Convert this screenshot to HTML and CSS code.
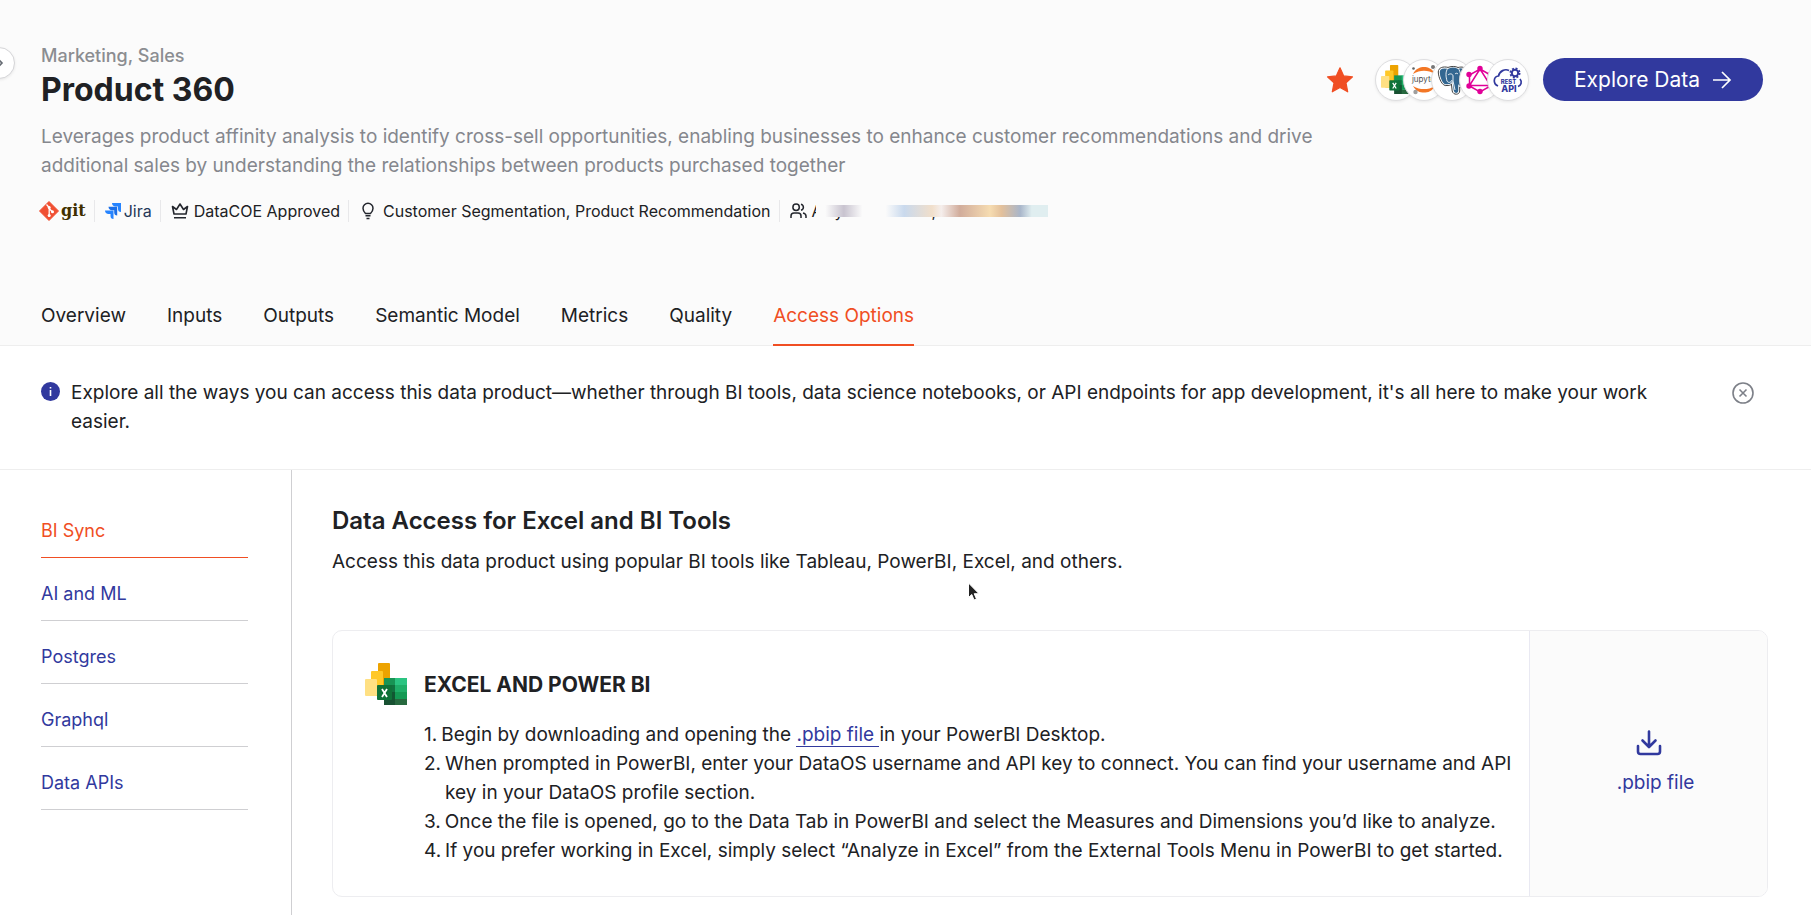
FILE: index.html
```html
<!DOCTYPE html>
<html lang="en">
<head>
<meta charset="utf-8">
<title>Product 360</title>
<link rel="stylesheet" href="styles.css">
</head>
<body>
<svg class="symbols" aria-hidden="true">
  <symbol id="excel-bi" viewBox="0 0 42 42">
    <rect x="13" y="0" width="12" height="30" rx="1" fill="#eda300"/>
    <rect x="6" y="8" width="12" height="25" rx="1" fill="#ffc828"/>
    <rect x="0" y="16" width="12" height="17" rx="1" fill="#ffe083"/>
    <rect x="19" y="15" width="12" height="14" fill="#189454"/>
    <rect x="30" y="15" width="12" height="7" fill="#2bc481"/>
    <rect x="30" y="22" width="12" height="7" fill="#1fae68"/>
    <rect x="19" y="29" width="12" height="13" fill="#185132"/>
    <rect x="30" y="29" width="12" height="7" fill="#149a54"/>
    <rect x="30" y="36" width="12" height="6" fill="#27693f"/>
    <rect x="25" y="22" width="5" height="14" fill="#0e5c32" opacity=".6"/>
    <rect x="12" y="22" width="15" height="15" rx="1" fill="#0f7238"/>
    <path d="M17 26l5 8M22 26l-5 8" stroke="#fff" stroke-width="1.8" fill="none"/>
  </symbol>
</svg>

<header class="hero">
  <button class="expand" aria-label="Expand sidebar">
    <svg width="8" height="12" viewBox="0 0 8 12"><path d="M2 3l3 3-3 3" fill="none" stroke="#666b73" stroke-width="1.600"/></svg>
  </button>
  <div class="hero-top">
    <div class="titles">
      <div class="domain">Marketing, Sales</div>
      <h1>Product 360</h1>
    </div>
    <div class="actions">
      <button class="star" aria-label="Favourite">
        <svg width="28" height="28" viewBox="0 0 28 28"><path d="M14 1.8l3.7 8.1 8.8 1-6.500 6 1.700 8.900L14 21.500l-7.700 4.300L8 16.900 1.500 10.900l8.800-1z" fill="#f04e23" stroke="#f04e23" stroke-width="1.200" stroke-linejoin="round"/></svg>
      </button>
      <div class="tools">
        <span class="tool"><svg width="29" height="29"><use href="#excel-bi"/></svg></span>
        <span class="tool"><svg width="30" height="32" viewBox="0 0 30 32">
          <path d="M4 10C7 4.500 11 3 15 3s8 1.500 11 7C22 7.500 19 6.800 15 6.800S8 7.500 4 10zM4 22c3 5.500 7 6.500 11 6.500s8-1 11-6.500c-4 2.500-7 3-11 3s-7-.5-11-3z" fill="#f37726"/>
          <circle cx="4.500" cy="4.500" r="1.300" fill="#616262"/><circle cx="24" cy="3" r="2" fill="#767677"/><circle cx="6.500" cy="28" r="2.200" fill="#9e9e9e"/>
          <text x="16" y="18" text-anchor="middle" class="logo-jupyter">jupyter</text></svg></span>
        <span class="tool"><svg width="30" height="30" viewBox="0 0 30 30">
          <path d="M10 20C5 21 2 12 2 7c0-4 4-5 9-4 4-2 8-1 10 0 4-1 7 0 7 3 0 4-2 8-4 12 1 1 2 2 3 2-2 2-4 2-5 1v5c0 3-5 4-6 0l-1-8c-1 2-3 2-5 2z" fill="#336791" stroke="#fff" stroke-width="1.500"/>
          <path d="M10 20.500C5 22 1.300 12 1.300 7c0-4.500 5-5.800 9.700-4.600C15 .8 19 1.500 21 2.500c4-1 7.700-.5 7.700 3.500 0 4-2 8-4 12l3 1.500c-1.700 2.500-4 2.500-5 2.500v4c0 4-6.500 4.500-7.500 0l-.8-7c-1 1.500-3 1.700-4.400 1.500z" fill="none" stroke="#444" stroke-width="1"/>
          <path d="M11 3c-3 4-2 9-1 13 1 2 4 2 5-1M21 3c3 4 3 9 2 14M11 10c2-2 5-1 5 1v5l2 9M18 9c1-1 2-1 3 0" fill="none" stroke="#fff" stroke-width=".9"/></svg></span>
        <span class="tool"><svg width="30" height="30" viewBox="0 0 30 30">
          <path d="M15 4l10.500 6v11L15 27 4.500 21V10zM15 4L4.500 20.500h21z" fill="none" stroke="#e10098" stroke-width="1.500"/>
          <g fill="#e10098"><circle cx="15" cy="3.500" r="2.700"/><circle cx="25.500" cy="9.500" r="2.700"/><circle cx="25.500" cy="21" r="2.700"/><circle cx="15" cy="26.500" r="2.700"/><circle cx="4" cy="21" r="2.700"/><circle cx="4" cy="9.500" r="2.700"/></g></svg></span>
        <span class="tool"><svg width="30" height="30" viewBox="0 0 30 30">
          <path d="M5 21C-.5 18.500.5 11.500 5.500 11 6.500 6 12 3.500 16 5.500M27 14c2.500 3 1 6.500-2 7.500" fill="none" stroke="#31399e" stroke-width="1.700"/>
          <circle cx="22" cy="8" r="3.200" fill="none" stroke="#31399e" stroke-width="2"/>
          <circle cx="22" cy="8" r="4.700" fill="none" stroke="#31399e" stroke-width="1.600" stroke-dasharray="2 1.690"/>
          <text x="15.500" y="18.500" text-anchor="middle" class="logo-rest">REST</text>
          <text x="16" y="27" text-anchor="middle" class="logo-api">API</text></svg></span>
      </div>
      <button class="explore">Explore Data
        <svg width="20" height="20" viewBox="0 0 20 20"><path d="M1 10h17M10 2l8 8-8 8" fill="none" stroke="#fff" stroke-width="1.700"/></svg>
      </button>
    </div>
  </div>
  <p class="summary">Leverages product affinity analysis to identify cross-sell opportunities, enabling businesses to enhance customer recommendations and drive additional sales by understanding the relationships between products purchased together</p>
  <ul class="meta">
    <li><a class="git" href="#git">
      <svg width="20" height="20" viewBox="0 0 20 20"><path d="M10 .5l9.500 9.500-9.500 9.500L.5 10z" fill="#f05033" stroke="#f05033" stroke-linejoin="round"/><path d="M7.500 3.500l2.700 3v9M10.200 7.500l3.300 3.500" stroke="#fff" stroke-width="1.300" fill="none"/><g fill="#fff"><circle cx="10.200" cy="6.500" r="1.500"/><circle cx="10.200" cy="14.500" r="1.500"/><circle cx="13.500" cy="10.800" r="1.500"/></g></svg>git</a></li>
    <li><a class="jira" href="#jira">
      <svg width="16" height="16" viewBox="0 0 16 16"><path d="M7 0h9v9c-2 0-3-1.200-3-3V3.500h-2.500C8.500 3.500 7 2 7 0z" fill="#2684ff"/><path d="M3.500 3.800h8.700v8.700c-2 0-3-1.200-3-3V7.200H7C5 7.200 3.500 5.800 3.500 3.800z" fill="#1b6fe8"/><path d="M0 7.500h8.500V16c-2 0-3-1.200-3-3v-2H3.500C1.500 11 0 9.500 0 7.500z" fill="#2684ff"/></svg>Jira</a></li>
    <li><svg width="18" height="18" viewBox="0 0 18 18"><path d="M3 12L1.500 4.500l4 3L9 2l3.500 5.500 4-3L15 12zM3 15.800h12" fill="none" stroke="#23262d" stroke-width="1.600" stroke-linejoin="round"/></svg>DataCOE Approved</li>
    <li class="usecase"><svg width="12" height="18" viewBox="0 0 12 18"><path d="M3.500 11.500C2 10 1 8.500 1 6.300a5 5 0 0 1 10 0c0 2.200-1 3.700-2.500 5.200zM3.500 13.800h5M4.500 16.500h3" fill="none" stroke="#23262d" stroke-width="1.500"/></svg>Customer Segmentation, Product Recommendation</li>
    <li><svg width="17" height="16" viewBox="0 0 17 16"><path d="M1 15v-2c0-2 1.500-3 3-3h4c1.800 0 3 1 3 3v2M9.300 4.200a3.200 3.200 0 1 1-6.400 0 3.200 3.200 0 0 1 6.400 0zM11 1.200c3.200 1 3.200 5 0 6M13 10c2 .5 3 1.500 3 3v2" fill="none" stroke="#23262d" stroke-width="1.500"/></svg>
      <span class="owners"><span>A</span><span>y</span><span>,</span></span></li>
  </ul>
  <nav class="tabs">
    <a href="#overview">Overview</a><a href="#inputs">Inputs</a><a href="#outputs">Outputs</a><a href="#model">Semantic Model</a><a href="#metrics">Metrics</a><a href="#quality">Quality</a><a class="active" href="#access">Access Options</a>
  </nav>
</header>

<section class="notice">
  <svg width="19" height="19" viewBox="0 0 19 19"><circle cx="9.500" cy="9.500" r="9.500" fill="#31399e"/><path d="M9.500 8v6M9.500 5v1.600" stroke="#fff" stroke-width="1.600"/></svg>
  <p>Explore all the ways you can access this data product—whether through BI tools, data science notebooks, or API endpoints for app development, it's all here to make your work easier.</p>
  <button aria-label="Dismiss"><svg width="22" height="22" viewBox="0 0 22 22"><path d="M7.500 7.500l7 7M14.500 7.500l-7 7M21 11a10 10 0 1 1-20 0 10 10 0 0 1 20 0z" fill="none" stroke="#7d8088" stroke-width="1.600"/></svg></button>
</section>

<div class="content">
  <nav class="side">
    <a class="active" href="#bi">BI Sync</a><a href="#ai">AI and ML</a><a href="#postgres">Postgres</a><a href="#graphql">Graphql</a><a href="#apis">Data APIs</a>
  </nav>
  <main>
    <h2>Data Access for Excel and BI Tools</h2>
    <p class="lead">Access this data product using popular BI tools like Tableau, PowerBI, Excel, and others.</p>
    <article class="card">
      <svg class="card-icon" width="42" height="42"><use href="#excel-bi"/></svg>
      <div class="card-body">
        <h3>EXCEL AND POWER BI</h3>
        <ol>
          <li><span>1.</span><p>Begin by downloading and opening the <a href="#pbip">.pbip file </a>in your PowerBI Desktop.</p></li>
          <li><span>2.</span><p>When prompted in PowerBI, enter your DataOS username and API key to connect. You can find your username and API key in your DataOS profile section.</p></li>
          <li><span>3.</span><p>Once the file is opened, go to the Data Tab in PowerBI and select the Measures and Dimensions you’d like to analyze.</p></li>
          <li><span>4.</span><p>If you prefer working in Excel, simply select “Analyze in Excel” from the External Tools Menu in PowerBI to get started.</p></li>
        </ol>
      </div>
      <a class="download" href="#pbip">
        <svg width="26" height="26" viewBox="0 0 26 26"><path d="M13 1.500v15M6.500 10.500L13 17l6.500-6.500M2 16v5.500C2 23 2.800 24 4.500 24h17c1.700 0 2.500-1 2.500-2.500V16" fill="none" stroke="#31399e" stroke-width="2.600" stroke-linecap="round" stroke-linejoin="round"/></svg>
        <span>.pbip file</span></a>
    </article>
  </main>
</div>
<svg class="pointer" width="14" height="20" viewBox="0 0 14 20" aria-hidden="true"><path d="M1.500 1v14.500l3.300-3 2.200 5.500 2.500-1-2.300-5.300H12z" fill="#222" stroke="#fff" stroke-width="1"/></svg>
</body>
</html>
```
FILE: styles.css
```css
* { box-sizing: border-box; }
body { margin: 0; background: #fff; color: #202124; font: 19px/29px Inter, sans-serif; position: relative; min-height: 100vh; overflow: hidden; display: flex; flex-direction: column; }
h1, h2, h3, p, ul, ol { margin: 0; padding: 0; }
ul, ol { list-style: none; }
a { color: inherit; text-decoration: none; }
button { font: inherit; border: 0; background: none; padding: 0; cursor: pointer; }
svg { display: block; flex: none; }
.symbols { position: absolute; width: 0; height: 0; }

.hero { background: #fbfbfb; border-bottom: 1px solid #eee; padding: 41px 48px 0 41px; position: relative; }
.expand { position: absolute; left: -17px; top: 47px; width: 32px; height: 32px; border: 1px solid #d5d5d8; border-radius: 50%; background: #fff; display: flex; align-items: center; justify-content: flex-end; padding-right: 9px; box-shadow: 0 1px 3px rgba(0, 0, 0, .08); }
.hero-top { display: flex; justify-content: space-between; align-items: flex-start; }
.domain { color: #8b8d91; font-size: 18px; font-weight: 500; }
h1 { font-size: 32px; font-weight: 700; line-height: 39px; }
.actions { display: flex; align-items: center; margin-top: 17px; }
.star { margin-right: 21px; }
.tools { display: flex; margin-right: 14px; }
.tool { width: 42px; height: 42px; border-radius: 50%; background: #fff; border: 1px solid #dedee0; box-shadow: 0 1px 3px rgba(0, 0, 0, .08); display: flex; align-items: center; justify-content: center; }
.tool + .tool { margin-left: -14px; }
.logo-jupyter { font: 8px Inter, sans-serif; fill: #4e4e4e; }
.logo-rest { font: 800 6px Inter, sans-serif; fill: #31399e; }
.logo-api { font: 800 9px Inter, sans-serif; fill: #31399e; }
.explore { display: flex; align-items: center; gap: 12px; height: 43px; padding: 0 31px; border-radius: 22px; background: #31399e; color: #fff; font-size: 21px; }
.summary { max-width: 1290px; color: #85878d; margin-top: 13px; }
.meta { display: flex; align-items: center; margin-top: 20px; margin-left: -2px; font-size: 16px; line-height: 22px; }
.meta li, .meta a { display: flex; align-items: center; gap: 5px; }
.meta li + li { border-left: 1px solid #e8e8ea; margin-left: 8px; padding-left: 10px; }
.meta li.usecase { gap: 9px; padding-left: 13px; }
.meta .git { color: #413000; font: 700 16px/22px "DejaVu Serif", serif; gap: 2px; }
.meta .jira { color: #253858; font-size: 16px; gap: 3px; }
.owners { position: relative; display: flex; width: 236px; }
.owners span + span { margin-left: 12px; }
.owners span + span + span { margin-left: 88px; }
.owners::after { content: ""; position: absolute; left: 4px; right: 0; top: 5px; height: 12px; background: linear-gradient(90deg, #fbfbfb 0 4%, #c8c3cf 12%, #fbfbfb 20% 30%, #c9d9ed 38%, #f1dfcb 50%, #f5eeec 54%, #d1ac9b 62%, #f6dcb1 75%, #e3c09b 80%, #a9b6ca 88%, #e0eef0 93% 100%); }

.tabs { display: flex; gap: 41px; margin-top: 79px; margin-bottom: -1px; }
.tabs a { padding-bottom: 14px; border-bottom: 2px solid transparent; }
.tabs .active { color: #f04e23; border-color: #f04e23; }

.notice { display: flex; padding: 32px 57px 33px 41px; border-bottom: 1px solid #eee; }
.notice > svg { margin-top: 4px; }
.notice p { flex: 1; margin: 0 80px 0 11px; }
.notice button { align-self: flex-start; margin-top: 4px; }

.content { display: flex; flex: 1; }
.side { width: 292px; flex: none; border-right: 1px solid #cfcfd2; padding: 25px 43px 0 41px; display: flex; flex-direction: column; color: #31399e; font-size: 18px; }
.side a { border-bottom: 1px solid #cfcfd2; padding: 21px 0 12px; }
.side .active { color: #f04e23; border-color: #f04e23; }
main { flex: 1; padding: 35px 43px 18px 40px; }
h2 { font-size: 24px; line-height: 32px; font-weight: 600; }
.lead { margin-top: 10px; }
.card { display: flex; border: 1px solid #ededf0; border-radius: 10px; margin-top: 54px; overflow: hidden; }
.card-icon { margin: 32px 17px 0 32px; }
.card-body { flex: 1; padding: 39px 14px 31px 0; }
h3 { font-size: 21px; line-height: 29px; font-weight: 700; margin-bottom: 21px; }
.card-body li { display: flex; gap: 4px; }
.card-body p a { color: #31399e; border-bottom: 1px solid #31399e; }
.download { width: 238px; flex: none; background: #fbfbfb; border-left: 1px solid #e9e9f2; color: #31399e; display: flex; flex-direction: column; align-items: center; justify-content: center; gap: 12px; }
.download span { padding-left: 14px; }
.pointer { position: absolute; left: 967px; top: 582px; }
```
